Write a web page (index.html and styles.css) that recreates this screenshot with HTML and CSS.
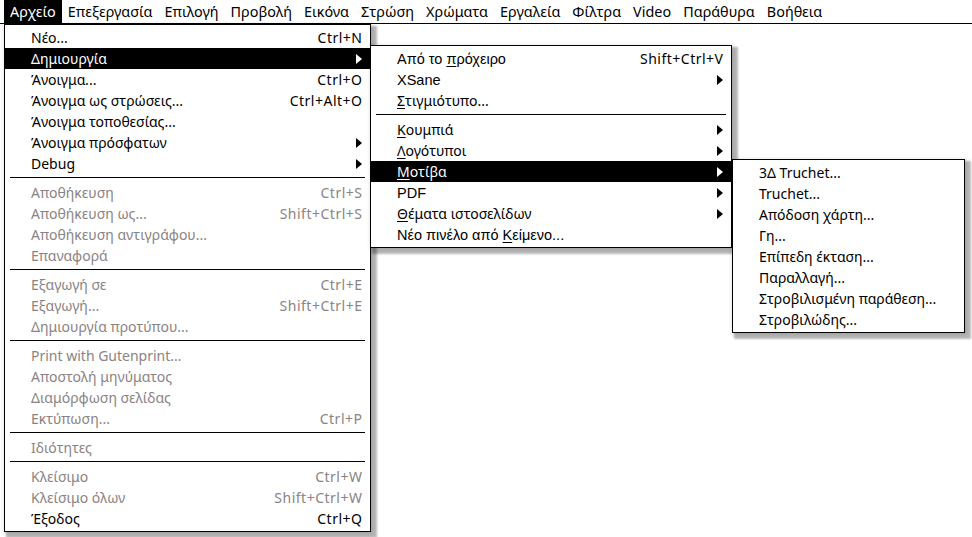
FILE: index.html
```html
<!DOCTYPE html>
<html lang="el">
<head>
<meta charset="utf-8">
<title>Αρχείο</title>
<link rel="stylesheet" href="styles.css">
</head>
<body>
<nav class="menubar">
  <span class="mb-item active">Αρχείο</span>
  <span class="mb-item">Επεξεργασία</span>
  <span class="mb-item">Επιλογή</span>
  <span class="mb-item">Προβολή</span>
  <span class="mb-item">Εικόνα</span>
  <span class="mb-item">Στρώση</span>
  <span class="mb-item">Χρώματα</span>
  <span class="mb-item">Εργαλεία</span>
  <span class="mb-item">Φίλτρα</span>
  <span class="mb-item">Video</span>
  <span class="mb-item">Παράθυρα</span>
  <span class="mb-item">Βοήθεια</span>
</nav>

<div class="menu menu-main">
  <div class="item"><span class="label">Νέο...</span><span class="accel">Ctrl+N</span></div>
  <div class="item active"><span class="label">Δημιουργία</span><span class="arrow"></span></div>
  <div class="item"><span class="label">Άνοιγμα...</span><span class="accel">Ctrl+O</span></div>
  <div class="item"><span class="label">Άνοιγμα ως στρώσεις...</span><span class="accel">Ctrl+Alt+O</span></div>
  <div class="item"><span class="label">Άνοιγμα τοποθεσίας...</span></div>
  <div class="item"><span class="label">Άνοιγμα πρόσφατων</span><span class="arrow"></span></div>
  <div class="item"><span class="label">Debug</span><span class="arrow"></span></div>
  <div class="sep"></div>
  <div class="item disabled"><span class="label">Αποθήκευση</span><span class="accel">Ctrl+S</span></div>
  <div class="item disabled"><span class="label">Αποθήκευση ως...</span><span class="accel">Shift+Ctrl+S</span></div>
  <div class="item disabled"><span class="label">Αποθήκευση αντιγράφου...</span></div>
  <div class="item disabled"><span class="label">Επαναφορά</span></div>
  <div class="sep"></div>
  <div class="item disabled"><span class="label">Εξαγωγή σε</span><span class="accel">Ctrl+E</span></div>
  <div class="item disabled"><span class="label">Εξαγωγή...</span><span class="accel">Shift+Ctrl+E</span></div>
  <div class="item disabled"><span class="label">Δημιουργία προτύπου...</span></div>
  <div class="sep"></div>
  <div class="item disabled"><span class="label">Print with Gutenprint...</span></div>
  <div class="item disabled"><span class="label">Αποστολή μηνύματος</span></div>
  <div class="item disabled"><span class="label">Διαμόρφωση σελίδας</span></div>
  <div class="item disabled"><span class="label">Εκτύπωση...</span><span class="accel">Ctrl+P</span></div>
  <div class="sep"></div>
  <div class="item disabled"><span class="label">Ιδιότητες</span></div>
  <div class="sep"></div>
  <div class="item disabled"><span class="label">Κλείσιμο</span><span class="accel">Ctrl+W</span></div>
  <div class="item disabled"><span class="label">Κλείσιμο όλων</span><span class="accel">Shift+Ctrl+W</span></div>
  <div class="item"><span class="label">Έξοδος</span><span class="accel">Ctrl+Q</span></div>
</div>

<div class="menu menu-create">
  <div class="item"><span class="label alt">Από το <u>π</u>ρόχειρο</span><span class="accel">Shift+Ctrl+V</span></div>
  <div class="item"><span class="label alt">XSane</span><span class="arrow"></span></div>
  <div class="item"><span class="label"><u>Σ</u>τιγμιότυπο...</span></div>
  <div class="sep"></div>
  <div class="item"><span class="label"><u>Κ</u>ουμπιά</span><span class="arrow"></span></div>
  <div class="item"><span class="label"><u>Λ</u>ογότυποι</span><span class="arrow"></span></div>
  <div class="item active"><span class="label"><u>Μ</u>οτίβα</span><span class="arrow"></span></div>
  <div class="item"><span class="label alt">PDF</span><span class="arrow"></span></div>
  <div class="item"><span class="label"><u>Θ</u>έματα ιστοσελίδων</span><span class="arrow"></span></div>
  <div class="item"><span class="label alt">Νέο πινέλο από <u>Κ</u>είμενο...</span></div>
</div>

<div class="menu menu-patterns">
  <div class="item"><span class="label">3Δ Truchet...</span></div>
  <div class="item"><span class="label">Truchet...</span></div>
  <div class="item"><span class="label">Απόδοση χάρτη...</span></div>
  <div class="item"><span class="label">Γη...</span></div>
  <div class="item"><span class="label">Επίπεδη έκταση...</span></div>
  <div class="item"><span class="label">Παραλλαγή...</span></div>
  <div class="item"><span class="label">Στροβιλισμένη παράθεση...</span></div>
  <div class="item"><span class="label">Στροβιλώδης...</span></div>
</div>
</body>
</html>
```

FILE: styles.css
```css
html, body {
  margin: 0;
  padding: 0;
  background: #ffffff;
}

body {
  width: 972px;
  height: 537px;
  overflow: hidden;
  position: relative;
  font-family: "Noto Sans", "Open Sans", sans-serif;
  font-size: 14px;
  color: #000;
}

.menubar {
  display: flex;
  align-items: stretch;
  height: 23px;
  padding-left: 4px;
  border-bottom: 1px solid #000;
  box-sizing: content-box;
  font-size: 14.4px;
}

.mb-item {
  display: flex;
  align-items: center;
  padding: 0 6px;
  line-height: 23px;
  height: 23px;
  white-space: nowrap;
}

.mb-item.active {
  background: #000;
  color: #fff;
}

.menu {
  position: absolute;
  background: #fff;
  border: 1px solid #000;
  box-sizing: border-box;
  padding: 2px 0;
  box-shadow: 4px 4px 2px 2px rgba(0, 0, 0, 0.28), 1px 1px 4px 1px rgba(0, 0, 0, 0.12);
}

.menu-main {
  left: 4px;
  top: 24px;
  width: 367px;
  height: 508px;
}

.menu-create {
  left: 370px;
  top: 45px;
  width: 362px;
  height: 203px;
}

.menu-patterns {
  left: 732px;
  top: 159px;
  width: 233px;
  height: 174px;
}

.item {
  display: flex;
  align-items: center;
  justify-content: space-between;
  height: 21px;
  padding: 0 8px 0 26px;
  white-space: nowrap;
}

.item.active {
  background: #000;
  color: #fff;
}

.item.disabled {
  color: #8a8383;
}

.accel {
  letter-spacing: 0.5px;
  margin-right: -0.5px;
}

.label.alt {
  font-family: "Liberation Sans", Arial, sans-serif;
  font-size: 14.5px;
}

.label u {
  text-decoration-thickness: 1px;
  text-underline-offset: 2px;
}

.arrow {
  width: 0;
  height: 0;
  border-left: 6px solid currentColor;
  border-top: 5px solid transparent;
  border-bottom: 5px solid transparent;
}

.sep {
  height: 1px;
  background: #000;
  margin: 3px 5px 4px 5px;
}
```
